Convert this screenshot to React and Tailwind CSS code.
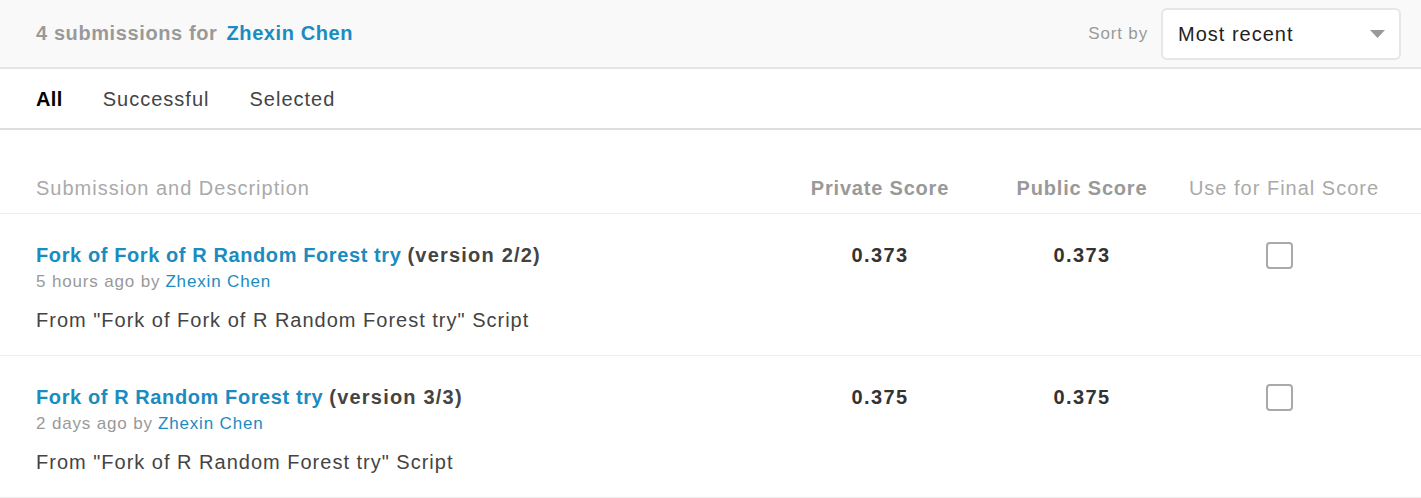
import React from "react";

const rows = [
  {
    title: "Fork of Fork of R Random Forest try",
    version: "(version 2/2)",
    when: "5 hours ago",
    by: "Zhexin Chen",
    desc: 'From "Fork of Fork of R Random Forest try" Script',
    priv: "0.373",
    pub: "0.373",
  },
  {
    title: "Fork of R Random Forest try",
    version: "(version 3/3)",
    when: "2 days ago",
    by: "Zhexin Chen",
    desc: 'From "Fork of R Random Forest try" Script',
    priv: "0.375",
    pub: "0.375",
  },
];

const SubmissionRow = ({ row }) => (
  <div className="flex border-b border-[#ececec]">
    <div className="flex-1 pl-9 pt-[27px] pb-[21px]">
      <div className="flex items-center h-[28px] text-[20px] font-bold tracking-[0.03em]">
        <a href="#" className="text-[#1a8cc0]">
          {row.title}
        </a>
        <span className="ml-[6px] text-[#444] tracking-[0.06em]">{row.version}</span>
      </div>
      <div className="h-[26px] flex items-center text-[17px] text-[#999] tracking-[0.05em]">
        {row.when} by <span className="ml-[5px] text-[#1a8cc0]">{row.by}</span>
      </div>
      <div className="mt-[11px] h-[28px] flex items-center text-[20px] text-[#444] tracking-[0.05em]">
        {row.desc}
      </div>
    </div>
    <div className="w-[202px] pt-[27px] flex justify-center">
      <div className="h-[28px] flex items-center text-[20px] font-bold text-[#333] tracking-[0.07em]">
        {row.priv}
      </div>
    </div>
    <div className="w-[202px] pt-[27px] flex justify-center">
      <div className="h-[28px] flex items-center text-[20px] font-bold text-[#333] tracking-[0.07em]">
        {row.pub}
      </div>
    </div>
    <div className="w-[202px] mr-9 pt-[27px] pr-[10px] flex justify-center">
      <div className="h-[28px] flex items-center">
        <span className="block w-[27px] h-[27px] rounded-[4px] border-2 border-[#a9a9a9] bg-white" />
      </div>
    </div>
  </div>
);

export default function App() {
  return (
    <div
      className="w-[1421px] bg-white text-[#333]"
      style={{ fontFamily: '"Liberation Sans", Arial, sans-serif' }}
    >
      <div className="h-[69px] bg-[#f9f9f9] border-b-2 border-[#e6e6e6] flex items-center justify-between pl-9 pr-5">
        <div className="text-[20px] font-bold text-[#999] tracking-[0.03em] -mt-[2px]">
          4 submissions for <span className="ml-[3px] text-[#1a8cc0]">Zhexin Chen</span>
        </div>
        <div className="flex items-center gap-[13px]">
          <span className="text-[17px] text-[#999] tracking-[0.05em]">Sort by</span>
          <div className="w-[240px] h-[52px] rounded-[6px] border-2 border-[#e6e6e6] bg-white flex items-center justify-between pl-[15px] pr-[14px]">
            <span className="text-[20px] text-[#222] tracking-[0.05em]">Most recent</span>
            <svg width="15" height="8" viewBox="0 0 15 8">
              <polygon points="0,0 15,0 7.5,8" fill="#999" />
            </svg>
          </div>
        </div>
      </div>

      <div className="h-[61px] border-b-2 border-[#dddddd] flex items-center gap-10 pl-9 text-[20px] tracking-[0.05em]">
        <span className="font-bold text-black tracking-[0.02em]">All</span>
        <span className="text-[#444]">Successful</span>
        <span className="text-[#444]">Selected</span>
      </div>

      <div className="mt-[33px] flex h-[51px] items-center border-b border-[#ececec] text-[20px]">
        <div className="flex-1 pl-9 text-[#aaa] tracking-[0.05em]">Submission and Description</div>
        <div className="w-[202px] text-center font-bold text-[#999] tracking-[0.04em]">Private Score</div>
        <div className="w-[202px] text-center font-bold text-[#999] tracking-[0.04em]">Public Score</div>
        <div className="w-[202px] mr-9 text-center text-[#aaa] tracking-[0.05em]">Use for Final Score</div>
      </div>

      {rows.map((row) => (
        <SubmissionRow key={row.title} row={row} />
      ))}
    </div>
  );
}
